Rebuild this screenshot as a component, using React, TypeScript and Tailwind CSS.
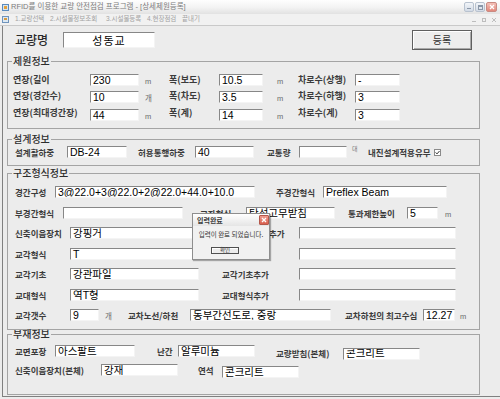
import React from "react";

type Kids = { className?: string; children?: React.ReactNode };

function Label({ className = "", children, big }: Kids & { big?: boolean }) {
  return (
    <div
      className={`shrink-0 font-['Noto_Sans_CJK_KR',sans-serif] font-bold leading-none text-[#3b3b3b] whitespace-nowrap ${
        big ? "text-[9px]" : "text-[8.5px]"
      } ${className}`}
    >
      {children}
    </div>
  );
}

function Input({ className = "", children }: Kids) {
  return (
    <div
      className={`shrink-0 h-[12px] flex items-center pl-[2px] overflow-hidden bg-white border border-t-[#878787] border-l-[#878787] border-r-[#f4f4f4] border-b-[#f4f4f4] font-['Liberation_Sans','Noto_Sans_CJK_KR',sans-serif] text-[10.5px] leading-none text-black whitespace-nowrap ${className}`}
    >
      {children}
    </div>
  );
}

function Unit({ className = "", children }: Kids) {
  return (
    <div
      className={`shrink-0 pt-[3px] font-['Liberation_Sans','Noto_Sans_CJK_KR',sans-serif] text-[7.5px] leading-none text-[#6b6b6b] whitespace-nowrap ${className}`}
    >
      {children}
    </div>
  );
}

function Group({ title, className = "", children }: Kids & { title: string }) {
  return (
    <fieldset className={`w-[473px] border border-[#a4a4a4] ${className}`}>
      <legend className="ml-[4px] px-[1px] font-['Noto_Sans_CJK_KR',sans-serif] font-medium text-[10px] leading-[10px] text-[#2c2c2c]">
        {title}
      </legend>
      {children}
    </fieldset>
  );
}

function TitleBar() {
  return (
    <div className="h-[14px] flex items-center bg-gradient-to-b from-[#fefefe] via-[#f4f4f4] to-[#e2e2e2]">
      <svg width="7" height="7" viewBox="0 0 7 7" className="ml-[2px] shrink-0">
        <rect x="0.5" y="0.5" width="6" height="6" fill="#d3e6f5" stroke="#5b8bbd" />
        <rect x="2" y="2" width="3" height="3" fill="#e3a03c" />
      </svg>
      <span className="ml-[2px] font-['Liberation_Sans','Noto_Sans_CJK_KR',sans-serif] text-[7.5px] leading-none text-[#7c7c7c] whitespace-nowrap">
        RFID를 이용한 교량 안전점검 프로그램 - [상세제원등록]
      </span>
      <div className="ml-auto mr-[3px] flex gap-[1px]">
        <div className="w-[10px] h-[10px] rounded-[2px] border border-[#b8c2cf] bg-gradient-to-b from-[#f2f5f9] to-[#d3dbe6] flex items-end justify-center pb-[2px]">
          <div className="w-[4px] h-[1px] bg-[#8a97a8]" />
        </div>
        <div className="w-[10px] h-[10px] rounded-[2px] border border-[#b8c2cf] bg-gradient-to-b from-[#f2f5f9] to-[#d3dbe6] flex items-center justify-center">
          <div className="w-[5px] h-[5px] border border-[#8a97a8] border-t-2" />
        </div>
        <div className="w-[11px] h-[10px] rounded-[2px] border border-[#c98a82] bg-gradient-to-b from-[#f3c0b8] to-[#e2877b] flex items-center justify-center">
          <svg width="6" height="6" viewBox="0 0 6 6">
            <path d="M1 1 L5 5 M5 1 L1 5" stroke="#ffffff" strokeWidth="1.3" />
          </svg>
        </div>
      </div>
    </div>
  );
}

function MenuBar() {
  return (
    <div className="h-[12px] flex items-center bg-[#f1f1f1] border-b border-[#c9c9c9] font-['Liberation_Sans','Noto_Sans_CJK_KR',sans-serif] text-[6.5px] leading-none text-[#a3a3a3] whitespace-nowrap">
      <svg width="7" height="7" viewBox="0 0 7 7" className="ml-[2px] shrink-0">
        <rect x="0.5" y="0.5" width="6" height="6" fill="#dbe8f4" stroke="#6f93bb" />
        <rect x="2" y="2" width="3" height="2" fill="#d89a3c" />
      </svg>
      <div className="ml-[6px] w-[35px]">1.교량선택</div>
      <div className="w-[56px]">2.시설물정보조회</div>
      <div className="w-[41px]">3.시설물등록</div>
      <div className="w-[35px]">4.현장점검</div>
      <div>끝내기</div>
      <div className="ml-auto mr-[4px] flex gap-[6px] items-center text-[#bdbdbd]">
        <div className="w-[4px] h-[1px] bg-[#bdbdbd] mt-[3px]" />
        <div className="w-[4px] h-[4px] border border-[#bdbdbd]" />
        <svg width="4" height="4" viewBox="0 0 4 4">
          <path d="M0 0 L4 4 M4 0 L0 4" stroke="#bdbdbd" strokeWidth="1" />
        </svg>
      </div>
    </div>
  );
}

function Dialog() {
  return (
    <div className="absolute left-[192px] top-[213px] w-[78px] h-[47px] bg-[#f1f1f1] border border-[#8e8e8e] shadow-[1px_1px_1px_rgba(0,0,0,0.3)] flex flex-col">
      <div className="h-[12px] flex items-center pl-[4px] bg-gradient-to-b from-[#ffffff] to-[#e5e5e5]">
        <span className="font-['Noto_Sans_CJK_KR',sans-serif] font-bold text-[7px] leading-none text-[#3c3c3c]">입력완료</span>
        <div className="ml-auto w-[10px] h-[10px] rounded-[1px] border border-[#b4584c] bg-gradient-to-b from-[#ef9c90] to-[#d8604f] flex items-center justify-center">
          <svg width="6" height="6" viewBox="0 0 6 6">
            <path d="M1 1 L5 5 M5 1 L1 5" stroke="#ffffff" strokeWidth="1.3" />
          </svg>
        </div>
      </div>
      <div className="mt-[5px] text-center font-['Noto_Sans_CJK_KR',sans-serif] text-[6.5px] leading-[7px] text-[#333333] whitespace-nowrap">
        입력이 완료 되었습니다.
      </div>
      <div className="mt-[9px] ml-[18px] w-[28px] h-[7px] border border-[#505050] bg-[#ececec] flex items-center justify-center shadow-[inset_1px_1px_0_#ffffff]">
        <span className="font-['Noto_Sans_CJK_KR',sans-serif] text-[5.5px] leading-none text-[#333333]">확인</span>
      </div>
    </div>
  );
}

export default function App() {
  return (
    <div className="w-[500px] h-[399px] overflow-hidden bg-[#ececec] relative">
      <TitleBar />
      <MenuBar />
      <div className="ml-[2px] h-[371px] border-l border-b border-[#808080] pl-[4px] pt-[4px]">
        <div className="w-[473px] flex items-center h-[20px]">
          <div className="w-[56px] pl-[8px] font-['Noto_Sans_CJK_KR',sans-serif] font-medium text-[12px] leading-none text-[#2a2a2a]">교량명</div>
          <div className="w-[92px] h-[16px] bg-white border border-t-[#878787] border-l-[#878787] border-r-[#f4f4f4] border-b-[#f4f4f4] flex items-center justify-center font-['Noto_Sans_CJK_KR',sans-serif] text-[11px] tracking-[1px] leading-none text-black">
            성동교
          </div>
          <button className="ml-auto mr-[8px] w-[60px] h-[20px] border border-[#5f5f5f] bg-[#ededed] shadow-[inset_1px_1px_0_#ffffff,inset_-1px_-1px_0_#a9a9a9] font-['Noto_Sans_CJK_KR',sans-serif] text-[10px] leading-none text-[#333333]">
            등록
          </button>
        </div>

        <Group title="제원정보" className="mt-[6px] h-[73px]">
          <div className="mt-[5px]">
            <div className="flex items-center h-[17.5px] pl-[5px]">
              <Label big className="w-[77px]">연장(길이</Label>
              <Input className="w-[49px]">230</Input>
              <Unit className="w-[30px] pl-[6px]">m</Unit>
              <Label big className="w-[50px]">폭(보도)</Label>
              <Input className="w-[44px]">10.5</Input>
              <Unit className="w-[35px] pl-[14px]">m</Unit>
              <Label big className="w-[57px]">차로수(상행)</Label>
              <Input className="w-[45px]">-</Input>
            </div>
            <div className="flex items-center h-[17.5px] pl-[5px]">
              <Label big className="w-[77px] mb-[3px]">연장(경간수)</Label>
              <Input className="w-[49px]">10</Input>
              <Unit className="w-[30px] pl-[6px]">개</Unit>
              <Label big className="w-[50px] mb-[3px]">폭(차도)</Label>
              <Input className="w-[44px]">3.5</Input>
              <Unit className="w-[35px] pl-[14px]">m</Unit>
              <Label big className="w-[57px] mb-[3px]">차로수(하행)</Label>
              <Input className="w-[45px]">3</Input>
            </div>
            <div className="flex items-center h-[17.5px] pl-[5px]">
              <Label big className="w-[77px] mb-[4px]">연장(최대경간장)</Label>
              <Input className="w-[49px]">44</Input>
              <Unit className="w-[30px] pl-[6px]">m</Unit>
              <Label big className="w-[50px] mb-[4px]">폭(계)</Label>
              <Input className="w-[44px]">14</Input>
              <Unit className="w-[35px] pl-[14px]">m</Unit>
              <Label big className="w-[57px] mb-[4px]">차로수(계)</Label>
              <Input className="w-[45px]">3</Input>
            </div>
          </div>
        </Group>

        <Group title="설계정보" className="mt-[5px] h-[32px]">
          <div className="mt-[1px] flex items-center h-[14px] pl-[7px]">
            <Label className="w-[52px]">설계활하중</Label>
            <Input className="w-[60px] h-[11px]">DB-24</Input>
            <Label className="w-[68px] pl-[11px]">허용통행하중</Label>
            <Input className="w-[59px] h-[11px]">40</Input>
            <Label className="w-[45px] pl-[13px]">교통량</Label>
            <Input className="w-[48px] h-[11px]" />
            <div className="w-[21px] pl-[5px] mb-[6px] font-['Noto_Sans_CJK_KR',sans-serif] text-[6px] leading-none text-[#777777]">대</div>
            <Label>내진설계적용유무</Label>
            <svg width="7" height="7" viewBox="0 0 7 7" className="ml-[3px] shrink-0">
              <rect x="0.5" y="0.5" width="6" height="6" fill="#ffffff" stroke="#8a8a8a" />
              <path d="M1.6 3.4 L3 4.9 L5.5 2" stroke="#333333" fill="none" strokeWidth="1" />
            </svg>
          </div>
        </Group>

        <Group title="구조형식정보" className="mt-[2px] h-[162px]">
          <div className="mt-[4px]">
            <div className="flex items-center h-[20.5px] pl-[7px]">
              <Label className="w-[40px]">경간구성</Label>
              <Input className="w-[200px]">3@22.0+3@22.0+2@22.0+44.0+10.0</Input>
              <Label className="w-[68px] pl-[21px]">주경간형식</Label>
              <Input className="w-[124px]">Preflex Beam</Input>
            </div>
            <div className="flex items-center h-[20.5px] pl-[7px]">
              <Label className="w-[48px]">부경간형식</Label>
              <Input className="w-[120px]" />
              <Label className="w-[63px] pl-[17px]">교좌형식</Label>
              <Input className="w-[89px]">탄성고무받침</Input>
              <Label className="w-[72px] pl-[13px]">통과제한높이</Label>
              <Input className="w-[31px]">5</Input>
              <Unit className="pl-[7px]">m</Unit>
            </div>
            <div className="flex items-center h-[20.5px] pl-[7px]">
              <Label className="w-[55px]">신축이음장치</Label>
              <Input className="w-[129px]">강핑거</Input>
              <Label className="w-[100px] pl-[23px]">신축이음장치추가</Label>
              <Input className="w-[157px]" />
            </div>
            <div className="flex items-center h-[20.5px] pl-[7px]">
              <Label className="w-[55px]">교각형식</Label>
              <Input className="w-[129px]">T</Input>
              <Label className="w-[100px] pl-[23px]">교각형식추가</Label>
              <Input className="w-[157px]" />
            </div>
            <div className="flex items-center h-[20.5px] pl-[7px]">
              <Label className="w-[55px]">교각기초</Label>
              <Input className="w-[129px]">강관파일</Input>
              <Label className="w-[100px] pl-[23px]">교각기초추가</Label>
              <Input className="w-[157px]" />
            </div>
            <div className="flex items-center h-[20.5px] pl-[7px]">
              <Label className="w-[55px]">교대형식</Label>
              <Input className="w-[129px]">역T형</Input>
              <Label className="w-[100px] pl-[23px]">교대형식추가</Label>
              <Input className="w-[157px]" />
            </div>
            <div className="flex items-center h-[20.5px] pl-[7px]">
              <Label className="w-[55px]">교각갯수</Label>
              <Input className="w-[29px] h-[10px]">9</Input>
              <Unit className="w-[29px] pl-[6px]">개</Unit>
              <Label className="w-[62px]">교차노선/하천</Label>
              <Input className="w-[141px]">동부간선도로, 중랑</Input>
              <Label className="w-[92px] pl-[14px]">교차하천의 최고수심</Label>
              <Input className="w-[32px]">12.27</Input>
              <Unit className="pl-[5px]">m</Unit>
            </div>
          </div>
        </Group>

        <Group title="부재정보" className="-mt-[1px] h-[66px]">
          <div className="mt-[2.5px]">
            <div className="flex items-center h-[19px] pl-[7px]">
              <Label className="w-[40px]">교면포장</Label>
              <Input className="w-[80px]">아스팔트</Input>
              <Label className="w-[43px] pl-[22px]">난간</Label>
              <Input className="w-[77px]">알루미늄</Input>
              <Label className="w-[88px] pl-[21px] mt-[4px]">교량받침(본체)</Label>
              <Input className="w-[77px] mt-[5px]">콘크리트</Input>
            </div>
            <div className="flex items-center h-[19px] pl-[7px]">
              <Label className="w-[86px]">신축이음장치(본체)</Label>
              <Input className="w-[77px]">강재</Input>
              <Label className="w-[44px] pl-[20px]">연석</Label>
              <Input className="w-[77px] mt-[4px]">콘크리트</Input>
            </div>
          </div>
        </Group>
      </div>
      <Dialog />
    </div>
  );
}
